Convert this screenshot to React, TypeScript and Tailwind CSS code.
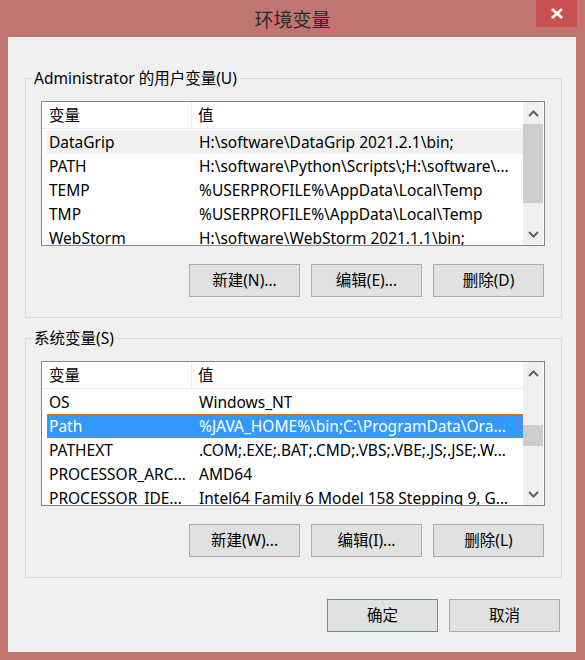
import React from "react";

type RowProps = { name: string; value: string; variant?: "none" | "grey" | "blue" };

function Row({ name, value, variant = "none" }: RowProps) {
  const cls =
    variant === "blue"
      ? "bg-[#3399ff] text-white border-[#cc7a1a] border-dotted"
      : variant === "grey"
      ? "bg-[#f0f0f0] text-black border-transparent"
      : "text-black border-transparent";
  return (
    <div className={`ml-[5px] h-[24px] pt-[2px] flex items-center border whitespace-nowrap ${cls}`}>
      <span className="w-[151px] pl-[1px] shrink-0 overflow-hidden">{name}</span>
      <span className="overflow-hidden">{value}</span>
    </div>
  );
}

function Chevron({ up }: { up?: boolean }) {
  return (
    <svg width="11" height="7" viewBox="0 0 11 7" className="block">
      <path
        d={up ? "M1 6 L5.5 1.5 L10 6" : "M1 1 L5.5 5.5 L10 1"}
        fill="none"
        stroke="#606060"
        strokeWidth="2"
      />
    </svg>
  );
}

function ScrollBar({ thumbClass }: { thumbClass: string }) {
  return (
    <div className="w-[20px] mr-[1px] bg-[#f0f0f0] flex flex-col shrink-0">
      <div className="h-[22px] flex items-center justify-center">
        <Chevron up />
      </div>
      <div className="flex-1">
        <div className={`bg-[#cdcdcd] ${thumbClass}`} />
      </div>
      <div className="h-[22px] flex items-center justify-center">
        <Chevron />
      </div>
    </div>
  );
}

function ListView({ rows, thumbClass }: { rows: RowProps[]; thumbClass: string }) {
  return (
    <div className="w-[504px] h-[145px] border border-[#828790] bg-white flex overflow-hidden">
      <div className="flex-1 flex flex-col overflow-hidden">
        <div className="h-[27px] shrink-0 flex border-b border-[#e5eef8]">
          <div className="w-[150px] pl-[7px] pt-[2px] flex items-center border-r border-[#e5eef8]">变量</div>
          <div className="pl-[6px] pt-[2px] flex items-center">值</div>
        </div>
        <div className="pt-[1px] flex flex-col">
          {rows.map((r, i) => (
            <Row key={i} {...r} />
          ))}
        </div>
      </div>
      <ScrollBar thumbClass={thumbClass} />
    </div>
  );
}

function Btn({ label, def }: { label: string; def?: boolean }) {
  return (
    <div
      className={`w-[111px] h-[33px] flex items-center justify-center bg-[#e1e1e1] border ${
        def ? "border-[#3399ff]" : "border-[#adadad]"
      }`}
    >
      {label}
    </div>
  );
}

export default function App() {
  const userRows: RowProps[] = [
    { name: "DataGrip", value: "H:\\software\\DataGrip 2021.2.1\\bin;", variant: "grey" },
    { name: "PATH", value: "H:\\software\\Python\\Scripts\\;H:\\software\\..." },
    { name: "TEMP", value: "%USERPROFILE%\\AppData\\Local\\Temp" },
    { name: "TMP", value: "%USERPROFILE%\\AppData\\Local\\Temp" },
    { name: "WebStorm", value: "H:\\software\\WebStorm 2021.1.1\\bin;" },
  ];
  const sysRows: RowProps[] = [
    { name: "OS", value: "Windows_NT" },
    { name: "Path", value: "%JAVA_HOME%\\bin;C:\\ProgramData\\Ora...", variant: "blue" },
    { name: "PATHEXT", value: ".COM;.EXE;.BAT;.CMD;.VBS;.VBE;.JS;.JSE;.W..." },
    { name: "PROCESSOR_ARC...", value: "AMD64" },
    { name: "PROCESSOR_IDE...", value: "Intel64 Family 6 Model 158 Stepping 9, G..." },
  ];

  return (
    <div className="w-[585px] h-[660px] bg-[#c27471] flex flex-col relative font-['Noto_Sans','Noto_Sans_CJK_SC',sans-serif] text-[15.5px] text-black">
      <div className="h-[37px] shrink-0 flex items-center justify-center pt-[2px]">
        <span className="text-[19px] text-[#2b2b2b] font-['Noto_Sans_CJK_SC',sans-serif]">环境变量</span>
      </div>
      <div className="absolute top-0 right-[8px] w-[41px] h-[27px] bg-[#c75050] flex items-center justify-center">
        <svg width="12" height="11" viewBox="0 0 12 11">
          <path d="M1 1 L11 10 M11 1 L1 10" stroke="white" strokeWidth="2.6" fill="none" />
        </svg>
      </div>

      <div className="ml-[8px] w-[568px] h-[615px] bg-[#f0f0f0] flex flex-col">
        <fieldset className="mt-[31px] ml-[17px] w-[537px] border border-[#dcdcdc] pl-[15px] pr-[16px] pb-[20px]">
          <legend className="-ml-[9px] px-[2px] leading-[20px]">Administrator 的用户变量(U)</legend>
          <div className="pt-[13px]">
            <ListView rows={userRows} thumbClass="h-[79px]" />
          </div>
          <div className="mt-[18px] flex justify-end gap-[11px] mr-[1px]">
            <Btn label="新建(N)..." />
            <Btn label="编辑(E)..." />
            <Btn label="删除(D)" />
          </div>
        </fieldset>

        <fieldset className="mt-[10px] ml-[17px] w-[537px] border border-[#dcdcdc] pl-[15px] pr-[16px] pb-[20px]">
          <legend className="-ml-[9px] px-[2px] leading-[20px]">系统变量(S)</legend>
          <div className="pt-[13px]">
            <ListView rows={sysRows} thumbClass="mt-[41px] h-[21px]" />
          </div>
          <div className="mt-[18px] flex justify-end gap-[11px] mr-[1px]">
            <Btn label="新建(W)..." />
            <Btn label="编辑(I)..." />
            <Btn label="删除(L)" />
          </div>
        </fieldset>

        <div className="mt-[21px] mr-[16px] flex justify-end gap-[11px]">
          <Btn label="确定" def />
          <Btn label="取消" />
        </div>
      </div>
    </div>
  );
}
